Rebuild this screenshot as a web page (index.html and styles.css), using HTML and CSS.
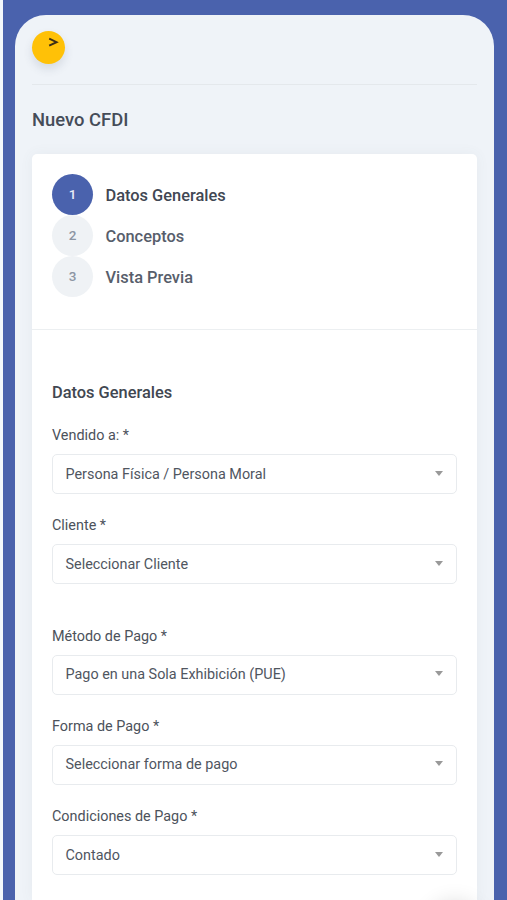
FILE: index.html
```html
<!DOCTYPE html>
<html lang="es">
<head>
<meta charset="utf-8">
<title>Nuevo CFDI</title>
<link rel="stylesheet" href="styles.css">
</head>
<body>
<main class="panel">
  <header class="topbar">
    <button class="toggle" aria-label="Menú"><svg width="12" height="11" viewBox="0 0 12 11"><path d="M1.2 1.7 8.6 5.2 1.2 8.7" fill="none" stroke="#3b2e16" stroke-width="1.9"/></svg></button>
  </header>
  <h1 class="title">Nuevo CFDI</h1>
  <section class="card">
    <ol class="steps">
      <li class="step active"><span class="num">1</span><span class="step-name">Datos Generales</span></li>
      <li class="step"><span class="num">2</span><span class="step-name">Conceptos</span></li>
      <li class="step"><span class="num">3</span><span class="step-name">Vista Previa</span></li>
    </ol>
    <form class="form">
      <h2 class="form-title">Datos Generales</h2>
      <div class="group">
        <div class="field"><label class="label">Vendido a: *</label><div class="select"><span>Persona Física / Persona Moral</span><i class="arrow"></i></div></div>
        <div class="field"><label class="label">Cliente *</label><div class="select"><span>Seleccionar Cliente</span><i class="arrow"></i></div></div>
      </div>
      <div class="group">
        <div class="field"><label class="label">Método de Pago *</label><div class="select"><span>Pago en una Sola Exhibición (PUE)</span><i class="arrow"></i></div></div>
        <div class="field"><label class="label">Forma de Pago *</label><div class="select"><span>Seleccionar forma de pago</span><i class="arrow"></i></div></div>
        <div class="field"><label class="label">Condiciones de Pago *</label><div class="select"><span>Contado</span><i class="arrow"></i></div></div>
      </div>
    </form>
  </section>
</main>
<div class="float-layer"><div class="float-shadow"></div></div>
</body>
</html>
```
FILE: styles.css
```css
* { box-sizing: border-box; }
html { background: #4a62ad; }
body {
  margin: 0;
  height: 900px;
  overflow: hidden;
  padding: 15px 13px 0 12px;
  border-left: 3px solid #f3f7fc;
  background: #4a62ad;
  font-family: Roboto, sans-serif;
  color: #40464f;
}
.panel {
  height: 885px;
  padding: 0 17px;
  border-radius: 31px 31px 0 0;
  background: #eff3f8;
}
.topbar {
  height: 70px;
  padding-top: 16px;
  border-bottom: 1px solid #e4e8ec;
}
.toggle {
  display: flex;
  align-items: flex-start;
  width: 33px;
  height: 33px;
  padding: 6px 0 0 16px;
  border: 0;
  border-radius: 50%;
  background: #ffc107;
  box-shadow: 0 5px 10px rgba(60, 70, 90, .14);
}
.toggle svg { display: block; }
.title {
  margin: 23px 0 22px;
  font-size: 18.4px;
  line-height: 24px;
  font-weight: 500;
  color: #454c58;
}
.card {
  height: 746px;
  border-radius: 5px 5px 0 0;
  background: #fff;
  box-shadow: 0 0 14px rgba(80, 110, 110, .06);
}
.steps {
  height: 176px;
  margin: 0;
  padding: 20px 20px 0;
  border-bottom: 1px solid #eceff1;
  list-style: none;
}
.step {
  display: flex;
  align-items: center;
  gap: 12.5px;
  height: 41px;
  font-weight: 500;
  color: #575e6b;
}
.num {
  width: 41px;
  height: 41px;
  border-radius: 50%;
  background: #eff2f5;
  color: #8c95a3;
  font-size: 13.5px;
  line-height: 41px;
  text-align: center;
}
.step-name {
  padding-top: 2px;
  font-size: 16.4px;
}
.active { color: #414753; }
.active .num { background: #4a62ad; color: #e6ebf7; }
.form { padding: 52px 20px 0; }
.form-title {
  margin: 0 0 21px;
  font-size: 16.4px;
  line-height: 22px;
  font-weight: 500;
  color: #414751;
}
.group + .group { margin-top: 41.6px; }
.field + .field { margin-top: 21.2px; }
.label {
  display: block;
  height: 20px;
  margin-bottom: 9px;
  padding-top: 1px;
  font-size: 14.4px;
  line-height: 20px;
  color: #4c525b;
}
.select {
  display: flex;
  align-items: center;
  justify-content: space-between;
  height: 40px;
  padding: 0 13px 0 12.5px;
  border: 1px solid #e8ebee;
  border-radius: 5px;
  font-size: 14.4px;
  color: #50565f;
}
.arrow {
  margin-bottom: 2px;
  border: 4px solid transparent;
  border-bottom: 0;
  border-top: 5px solid #999;
}
.float-layer {
  position: absolute;
  left: 380px;
  top: 860px;
  width: 114px;
  height: 40px;
  overflow: hidden;
}
.float-shadow {
  width: 42px;
  height: 42px;
  margin: 47px 0 0 54px;
  border-radius: 50%;
  box-shadow: 0 0 22px 4px rgba(0, 0, 0, .16);
}
```
